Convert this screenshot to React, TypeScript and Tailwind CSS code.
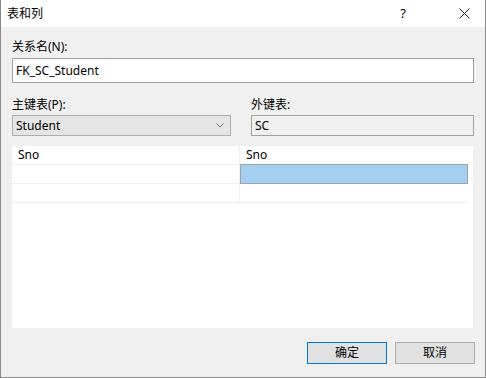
import React from "react";

const font = "font-['Segoe_UI','Noto_Sans','Noto_Sans_CJK_SC',sans-serif]";

const rows = [
	{ left: "Sno", right: "Sno", header: true },
	{ left: "", right: "", selected: true },
	{ left: "", right: "" },
];

const App: React.FC = () => {
	return (
		<div
			className={`w-[486px] h-[378px] flex flex-col bg-[#f0f0f0] border-x border-b border-[#8a8a8a] text-[12px] text-black ${font}`}
		>
			{/* title bar */}
			<div className="h-[27px] bg-white flex items-center shrink-0">
				<span className="pl-[6px] leading-none">表和列</span>
				<span className="ml-auto mr-[53px] text-[13px] leading-none">?</span>
				<svg width="11" height="11" viewBox="0 0 11 11" className="mr-[15px]">
					<path d="M0.5 0.5 L10.5 10.5 M10.5 0.5 L0.5 10.5" stroke="#222" strokeWidth="1" />
				</svg>
			</div>

			<div className="flex flex-col px-[11px]">
				<div className="mt-[11px] h-[17px] leading-[17px]">关系名(N):</div>
				<div className="mt-[3px] w-[462px] h-[25px] bg-white border border-[#a0a0a0] flex items-center pl-[3px]">
					FK_SC_Student
				</div>

				<div className="mt-[13px] flex">
					<div className="w-[239px]">
						<div className="h-[17px] leading-[17px]">主键表(P):</div>
						<div className="mt-[2px] w-[219px] h-[21px] bg-[#e5e5e5] border border-[#adadad] flex items-center pl-[3px] pr-[6px]">
							<span>Student</span>
							<svg width="8" height="5" viewBox="0 0 8 5" className="ml-auto">
								<path d="M0.5 0.5 L4 4 L7.5 0.5" fill="none" stroke="#777" strokeWidth="1" />
							</svg>
						</div>
					</div>
					<div>
						<div className="h-[17px] leading-[17px]">外键表:</div>
						<div className="mt-[2px] w-[223px] h-[21px] bg-[#f0f0f0] border border-[#a0a0a0] flex items-center pl-[3px]">
							SC
						</div>
					</div>
				</div>

				{/* grid */}
				<div className="mt-[10px] w-[461px] h-[182px] bg-white pr-[5px]">
					{rows.map((r, i) => (
						<div key={i} className="flex h-[19px] border-b border-[#f0f0f0]">
							<div className="w-[228px] border-r border-[#f0f0f0] flex items-center pl-[6px]">
								{r.left}
							</div>
							<div
								className={
									r.selected
										? "w-[228px] -mt-px h-[20px] bg-[#a4cff1] border border-[#9ba3ab] flex items-center pl-[6px]"
										: "w-[228px] flex items-center pl-[6px]"
								}
							>
								{r.right}
							</div>
						</div>
					))}
				</div>

				<div className="mt-[14px] flex justify-end gap-[8px] -mr-[1px]">
					<button className="w-[80px] h-[22px] bg-[#e1e1e1] border border-[#0078d7] text-[12px]">
						确定
					</button>
					<button className="w-[80px] h-[22px] bg-[#e1e1e1] border border-[#adadad] text-[12px]">
						取消
					</button>
				</div>
			</div>
		</div>
	);
};

export default App;
